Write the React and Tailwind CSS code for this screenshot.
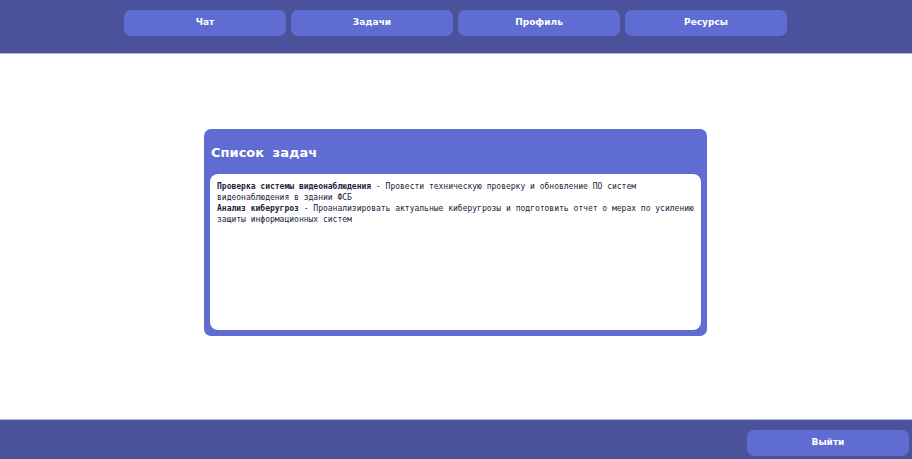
export default function App() {
  const nav = ["Чат", "Задачи", "Профиль", "Ресурсы"];
  return (
    <div className="flex h-[459px] w-full flex-col overflow-hidden bg-white">
      <header className="flex h-[54px] shrink-0 justify-center gap-[5px] border-b border-[#b4b9de] bg-[#4a529c] pt-[10px] pr-[1px]">
        {nav.map((n) => (
          <button
            key={n}
            className="h-[26px] w-[162px] rounded-[7px] bg-[#5f6dd2] text-[9px] font-bold text-white"
            style={{ fontFamily: '"DejaVu Sans", sans-serif' }}
          >
            {n}
          </button>
        ))}
      </header>
      <main className="flex flex-1 justify-center pt-[75px] pr-[1px]">
        <section className="h-[207px] w-[503px] rounded-[7px] bg-[#5f6dd2] px-[6px] pb-[6px]">
          <h2
            className="h-[45px] pt-[16px] pl-[1px] text-[13px] leading-[15px] font-bold text-white [word-spacing:4px]"
            style={{ fontFamily: '"DejaVu Sans", sans-serif' }}
          >
            Список задач
          </h2>
          <div
            className="h-[156px] rounded-[8px] bg-white px-[7px] pt-[7px] text-[8px] leading-[11px] text-[#1c2340]"
            style={{ fontFamily: '"DejaVu Sans Mono", monospace' }}
          >
            <div>
              <b>Проверка системы видеонаблюдения</b> - Провести техническую проверку и обновление ПО систем видеонаблюдения в здании ФСБ
            </div>
            <div>
              <b>Анализ киберугроз</b> - Проанализировать актуальные киберугрозы и подготовить отчет о мерах по усилению защиты информационных систем
            </div>
          </div>
        </section>
      </main>
      <footer className="flex h-[40px] shrink-0 justify-end border-t border-[#b4b9de] bg-[#4a529c] pt-[10px] pr-[3px]">
        <button
          className="h-[26px] w-[162px] rounded-[7px] bg-[#5f6dd2] text-[9px] font-bold text-white"
          style={{ fontFamily: '"DejaVu Sans", sans-serif' }}
        >
          Выйти
        </button>
      </footer>
    </div>
  );
}
